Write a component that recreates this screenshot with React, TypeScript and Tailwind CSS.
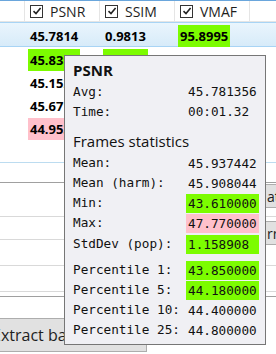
import React from "react";

const UI = { fontFamily: '"Open Sans", "Noto Sans", sans-serif' };
const MONO = { fontFamily: '"DejaVu Sans Mono", monospace' };

type Cell = { v: string; hl?: "g" | "r" };

const ROWS: Cell[][] = [
  [{ v: "45.7814" }, { v: "0.9813" }, { v: "95.8995", hl: "g" }],
  [{ v: "45.8391", hl: "g" }, { v: "0.9847", hl: "g" }, { v: "95.4596" }],
  [{ v: "45.1522" }, { v: "0.9795" }, { v: "94.9120" }],
  [{ v: "45.6718" }, { v: "0.9808" }, { v: "95.6433" }],
  [{ v: "44.9536", hl: "r" }, { v: "0.9781" }, { v: "94.5210" }],
];

const FRAMES: { label: string; value: string; hl?: "g" | "r"; gap?: string }[] = [
  { label: "Mean:", value: "45.937442" },
  { label: "Mean (harm):", value: "45.908044" },
  { label: "Min:", value: "43.610000", hl: "g" },
  { label: "Max:", value: "47.770000", hl: "r" },
  { label: "StdDev (pop):", value: "1.158908", hl: "g", gap: "mt-px" },
  { label: "Percentile 1:", value: "43.850000", hl: "g", gap: "mt-[6px]" },
  { label: "Percentile 5:", value: "44.180000", hl: "g" },
  { label: "Percentile 10:", value: "44.400000" },
  { label: "Percentile 25:", value: "44.800000" },
];

function Check() {
  return (
    <span className="w-[13px] h-[13px] border border-[#333] bg-white flex items-center justify-center shrink-0">
      <svg width="10" height="10" viewBox="0 0 10 10">
        <path d="M1.5 5.2 L4 7.6 L8.6 2" fill="none" stroke="#222" strokeWidth="1.6" />
      </svg>
    </span>
  );
}

function hlClass(hl?: "g" | "r") {
  if (hl === "g") return "bg-[#7cfc00]";
  if (hl === "r") return "bg-[#ffc0cb]";
  return "";
}

export default function App() {
  return (
    <div className="relative w-[276px] h-[354px] overflow-hidden bg-white text-black" style={UI}>
      {/* grid */}
      <div className="h-px bg-[#6aa6dc]" />
      <div className="flex h-[21px] border-b border-[#e5e5e5]">
        <div className="w-[25px] border-r border-[#e5e5e5]" />
        {["PSNR", "SSIM", "VMAF"].map((h) => (
          <div key={h} className="w-[75px] border-r border-[#e5e5e5] flex items-center gap-[7px] pl-[5px] text-[14px] text-[#1e1e1e]">
            <Check />
            <span>{h}</span>
          </div>
        ))}
      </div>
      {ROWS.map((row, i) => (
        <div
          key={i}
          className={
            i === 0
              ? "flex h-[25px] border-y border-[#a8d4f5] bg-gradient-to-b from-[#eaf5fd] to-[#d7ebf9] items-center"
              : "flex h-[23px] items-center"
          }
        >
          <div className="w-[25px]" />
          {row.map((c, j) => (
            <div key={j} className="w-[75px] pl-[3px]">
              <span className={"px-[2px] py-[2px] font-bold text-[13px] leading-[15px] " + hlClass(c.hl)}>{c.v}</span>
            </div>
          ))}
        </div>
      ))}
      <div className="h-[23px]" />
      <div className="h-px bg-[#bcdcf0]" />
      <div className="h-[19px]" />
      <div className="h-px bg-[#a0a0a0]" />
      <div className="h-[33px]" />
      <div className="h-px bg-[#d9d9d9]" />
      <div className="h-[22px]" />
      <div className="h-px bg-[#d9d9d9]" />
      <div className="h-[25px]" />
      <div className="h-px bg-[#d9d9d9]" />
      <div className="h-[25px]" />
      <div className="h-px bg-[#d9d9d9]" />
      <div className="h-[4px]" />
      <div className="h-px bg-[#a0a0a0]" />
      <div className="h-[21px]" />
      <div className="-ml-[10px] w-[157px] h-[34px] bg-[#e1e1e1] border border-[#adadad] flex items-center pl-[1px] text-[16px] text-[#1e1e1e]">
        Extract bad frames
      </div>

      {/* buttons partly hidden on the right */}
      <div className="absolute left-[200px] top-[184px] w-[90px] h-[24px] bg-[#e1e1e1] border border-[#adadad] flex items-center pl-[66px] text-[14px] text-[#1e1e1e]">
        at
      </div>
      <div className="absolute left-[200px] top-[221px] w-[90px] h-[24px] bg-[#e1e1e1] border border-[#adadad] flex items-center pl-[66px] text-[14px] text-[#1e1e1e]">
        rr
      </div>

      {/* tooltip */}
      <div className="absolute left-[64px] top-[55px] w-[202px] h-[290px] bg-[#f0f0f4] border border-[#767676] pl-[8px] pt-[4px] text-[#111]">
        <div className="h-[20px] leading-[20px] font-bold text-[15px]">PSNR</div>
        <div className="mt-[2px] text-[12.7px]" style={MONO}>
          <div className="flex h-[20px] items-center">
            <span className="w-[115px]">Avg:</span>
            <span>45.781356</span>
          </div>
          <div className="flex h-[20px] items-center">
            <span className="w-[115px]">Time:</span>
            <span>00:01.32</span>
          </div>
        </div>
        <div className="mt-[9px] h-[20px] leading-[20px] text-[15px]">Frames statistics</div>
        <div className="mt-[2px] text-[12.7px]" style={MONO}>
          {FRAMES.map((f) => (
            <div key={f.label} className={"flex h-[20px] items-center " + (f.gap ?? "")}>
              <span className="w-[113px] whitespace-pre">{f.label}</span>
              <span className={"w-[73px] h-[19px] pl-[2px] leading-[19px] " + hlClass(f.hl)}>{f.value}</span>
            </div>
          ))}
        </div>
      </div>
    </div>
  );
}
